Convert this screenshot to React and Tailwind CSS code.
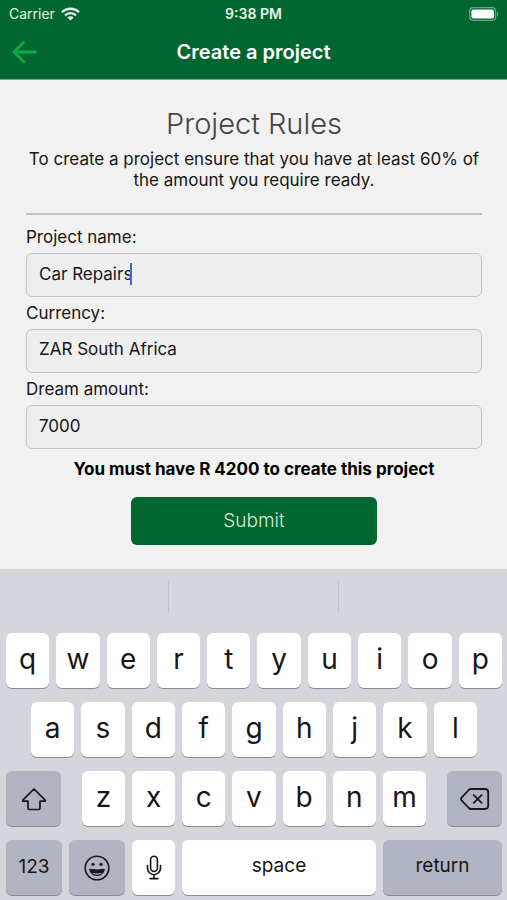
import React, { useState } from 'react';

const KEY = 'flex h-[55px] items-center justify-center rounded-md shadow-[0_1px_0_#8a8c91]';
const LETTER = `${KEY} min-w-0 flex-1 bg-white pb-1 text-[28px] leading-8`;
const DARK = `${KEY} bg-[#b1b5c1]`;
const LABEL = 'block h-8 text-[17px] leading-8';
const FIELD = 'block h-11 w-full appearance-none rounded-md border border-[#c5c5c5] bg-[#eeeeee] px-3 pb-[2px] text-[17px] outline-none';

const WifiIcon = () => (
    <svg width="19" height="14" viewBox="0 0 19 14" fill="none" stroke="currentColor" strokeWidth="2.3">
        <path d="M1 5.2a12.2 12.2 0 0 1 17 0" />
        <path d="M4 8.4a7.8 7.8 0 0 1 11 0" />
        <path d="M9.5 13.6 6.4 10.6a4.4 4.4 0 0 1 6.2 0z" fill="currentColor" stroke="none" />
    </svg>
);

const BatteryIcon = () => (
    <svg width="30" height="14" viewBox="0 0 30 14">
        <rect x="0.7" y="0.7" width="26" height="12.6" rx="3.5" fill="none" stroke="#6ba783" strokeWidth="1.2" />
        <rect x="2.4" y="2.4" width="22.6" height="9.2" rx="2" fill="#fff" />
        <path d="M28 4.7c1.8.8 1.8 3.8 0 4.6z" fill="#6ba783" />
    </svg>
);

const BackIcon = () => (
    <svg width="26" height="24" viewBox="0 0 26 24" fill="none" stroke="#0bab43" strokeWidth="2.8">
        <path d="M24.5 12H2M12.5 1.5 2 12 12.5 22.5" />
    </svg>
);

const ShiftIcon = () => (
    <svg width="26" height="24" viewBox="0 0 26 24" fill="none" stroke="#16181d" strokeWidth="1.7" strokeLinejoin="round">
        <path d="M13 2 1.8 13.2q-.6 1 .6 1H7v7q0 1.3 1.3 1.3h9.4q1.3 0 1.3-1.3v-7h4.6q1.2 0 .6-1z" />
    </svg>
);

const EmojiIcon = () => (
    <svg width="26" height="26" viewBox="0 0 26 26" fill="none" stroke="#16181d" strokeWidth="1.6">
        <circle cx="13" cy="13" r="11.8" />
        <circle cx="9" cy="9.3" r="1.6" fill="#16181d" stroke="none" />
        <circle cx="17" cy="9.3" r="1.6" fill="#16181d" stroke="none" />
        <path d="M5.6 14.2q7.4 1.6 14.8 0c-.6 4-3.8 6.4-7.4 6.4s-6.8-2.4-7.4-6.4z" fill="#16181d" strokeWidth="1" />
        <path d="M7.8 17.8q5.2 1.4 10.4 0-1.8 2-5.2 2t-5.2-2z" fill="#b1b5c1" stroke="none" />
    </svg>
);

const MicIcon = () => (
    <svg width="16" height="25" viewBox="0 0 16 25" fill="none" stroke="#16181d" strokeWidth="1.6" strokeLinecap="round">
        <rect x="4.6" y="1.2" width="6.8" height="15.2" rx="3.4" />
        <path d="M1.5 10.5v2.7a6.5 6.5 0 0 0 13 0v-2.7M8 19.8v3.7M4 23.6h8" />
    </svg>
);

const DeleteIcon = () => (
    <svg width="30" height="22" viewBox="0 0 30 22" fill="none" stroke="#16181d" strokeWidth="1.8" strokeLinejoin="round">
        <path d="M11.2 1H25q3.2 0 3.2 3.2v13.6q0 3.2-3.2 3.2H11.2q-1.4 0-2.4-1L1.6 12.3q-1.2-1.3 0-2.6L8.8 2q1-1 2.4-1z" />
        <path d="m13.3 6.6 8.8 8.8M22.1 6.6l-8.8 8.8" />
    </svg>
);

const Letters = ({ keys, onPress }) => keys.split('').map((k) => (
    <button key={k} type="button" className={LETTER} onClick={() => onPress(k)}>{k}</button>
));

const Keyboard = ({ onPress, onDelete }) => (
    <section aria-label="Keyboard" className="bg-[#d4d6dc] pb-[5px]">
        {/* Suggestions */}
        <div className="flex h-16 pt-3">
            <div className="h-8 flex-1 border-r border-[#c0c3ca]" />
            <div className="h-8 flex-1 border-r border-[#c0c3ca]" />
            <div className="h-8 flex-1" />
        </div>

        <div className="flex flex-col gap-[14px] pr-[5px] pl-[6px]">
            <div className="flex gap-[7px]"><Letters keys="qwertyuiop" onPress={onPress} /></div>
            <div className="flex gap-[7px] px-[25px]"><Letters keys="asdfghjkl" onPress={onPress} /></div>
            <div className="flex gap-[21px]">
                <button type="button" aria-label="Shift" className={`${DARK} w-[55px]`}><ShiftIcon /></button>
                <div className="flex flex-1 gap-[7px]"><Letters keys="zxcvbnm" onPress={onPress} /></div>
                <button type="button" aria-label="Delete" onClick={onDelete} className={`${DARK} w-[55px]`}><DeleteIcon /></button>
            </div>
            <div className="flex gap-[7px] text-[19px]">
                <button type="button" className={`${DARK} w-14`}>123</button>
                <button type="button" aria-label="Emoji" className={`${DARK} w-14`}><EmojiIcon /></button>
                <button type="button" aria-label="Dictate" className={`${KEY} w-[43px] bg-white`}><MicIcon /></button>
                <button type="button" onClick={() => onPress(' ')} className={`${KEY} flex-1 bg-white pb-[2px]`}>space</button>
                <button type="button" className={`${DARK} w-[119px] pb-[2px]`}>return</button>
            </div>
        </div>
    </section>
);

export default function App() {
    const [name, setName] = useState('Car Repairs');
    const [amount, setAmount] = useState('7000');
    const required = Math.round(Number(amount) * 0.6) || 0;

    return (
        <div className="flex min-h-screen flex-col bg-[#f1f1f1] font-['Inter',sans-serif] text-[#161616]">
            {/* Header */}
            <header className="border-b border-[#6fb287] bg-[#01662f] text-white">
                <div className="grid h-7 grid-cols-3 items-center px-2 text-sm text-[#e6f3e8]">
                    <div className="flex items-center gap-[6px] pl-px">Carrier <WifiIcon /></div>
                    <div className="text-center font-semibold">9:38 PM</div>
                    <div className="flex justify-end"><BatteryIcon /></div>
                </div>
                <div className="grid h-[51px] grid-cols-[40px_1fr_40px] items-center px-3 pb-[3px]">
                    <button type="button" aria-label="Back"><BackIcon /></button>
                    <h1 className="text-center text-xl font-semibold">Create a project</h1>
                </div>
            </header>

            <main className="flex-1 pt-6 pr-[25px] pl-[26px]">
                <h2 className="text-center text-[29px] leading-10 font-light text-[#444444]">Project Rules</h2>
                <p className="pt-[5px] text-center text-[17px] leading-[21px]">
                    To create a project ensure that you have at least 60% of the amount you require ready.
                </p>
                <hr className="mt-[22px] border-t-2 border-[#c3c3c3]" />

                <form onSubmit={(e) => e.preventDefault()} className="pt-[6px]">
                    <label htmlFor="name" className={LABEL}>Project name:</label>
                    <div className="relative">
                        <input id="name" value={name} onChange={(e) => setName(e.target.value)} className={`${FIELD} caret-[#3f66e0]`} />
                        <span className="absolute top-[10px] left-[104px] h-[22px] w-[2px] bg-[#3f66e0]" />
                    </div>
                    <label htmlFor="currency" className={LABEL}>Currency:</label>
                    <select id="currency" className={FIELD}>
                        <option>ZAR South Africa</option>
                    </select>
                    <label htmlFor="amount" className={LABEL}>Dream amount:</label>
                    <input id="amount" inputMode="numeric" value={amount} onChange={(e) => setAmount(e.target.value)} className={FIELD} />

                    <p className="pt-2 pb-4 text-center text-[17px] leading-6 font-bold text-black">You must have R {required} to create this project</p>
                    <button type="submit" className="mx-auto mb-6 block h-12 w-[54%] rounded-md bg-[#01662f] text-[19px] font-light text-[#d3ecd6]">
                        Submit
                    </button>
                </form>
            </main>

            <Keyboard
                onPress={(k) => setName(name + k)}
                onDelete={() => setName(name.slice(0, -1))}
            />
        </div>
    );
}
